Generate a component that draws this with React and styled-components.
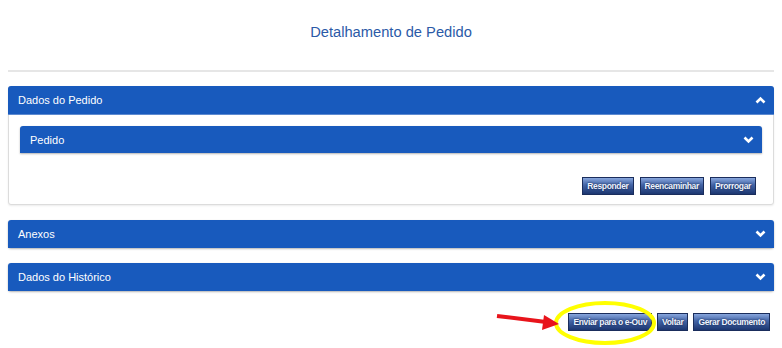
import React from "react";
import styled, { createGlobalStyle } from "styled-components";

const GlobalStyle = createGlobalStyle`
    body{
        margin: 0;
        background: #fff;
        font-family: "Liberation Sans", Arial, sans-serif;
    }
`;

const Page = styled.div`
    position: relative;
    padding: 0 8px;
    height: 348px;
    box-sizing: border-box;
`;

const Title = styled.h1`
    margin: 0;
    padding-top: 22px;
    font-size: 14.7px;
    line-height: 20px;
    font-weight: 400;
    text-align: center;
    color: #2b5aa7;
`;

const Divider = styled.div`
    margin-top: 28px;
    height: 2px;
    background: #e6e6e6;
`;

const Panel = styled.div`
    margin-top: ${(p) => p.gap || 15}px;
    border: ${(p) => (p.open ? "1px solid #dcdcdc" : "none")};
    border-radius: 3px;
    box-shadow: ${(p) => (p.open ? "0 1px 2px rgba(0,0,0,0.08)" : "0 1px 2px rgba(0,0,0,0.3)")};
    background: #fff;
`;

const Header = styled.div`
    display: flex;
    align-items: center;
    justify-content: space-between;
    height: ${(p) => p.h || 28}px;
    margin: ${(p) => (p.outer ? "-1px -1px 0" : "0")};
    padding: 0 8px 0 10px;
    background: #185abd;
    color: #fff;
    font-size: 11px;
    border-radius: 3px 3px 0 0;
    box-shadow: ${(p) => (p.inner ? "0 1px 2px rgba(0,0,0,0.3)" : "none")};
    border-bottom: ${(p) => (p.outer ? "1px solid #5d8ad0" : "none")};
`;

const PanelBody = styled.div`
    padding: 11px 11px 9px;
`;

const ButtonRow = styled.div`
    display: flex;
    justify-content: flex-end;
    gap: ${(p) => p.gap || 6}px;
    margin-top: ${(p) => p.top || 24}px;
    padding-right: ${(p) => p.right || 6}px;
`;

const Button = styled.button`
    height: 18px;
    padding: 0 4px;
    border: 1px solid #1a2d5c;
    background: linear-gradient(#88a6dd 0%, #4566a8 42%, #1c3670 100%);
    color: #eef3ff;
    font-family: "Liberation Sans", Arial, sans-serif;
    font-weight: 700;
    font-size: 8.5px;
    letter-spacing: -0.35px;
    text-shadow: 0 0 2px #0b1a3c;
    cursor: pointer;
`;

const Overlay = styled.svg`
    position: absolute;
    left: 488px;
    top: 296px;
`;

const Chevron = ({ up }) => (
    <svg width="11" height="8" viewBox="0 0 11 8">
        <polyline
            points={up ? "1.5,6.5 5.5,2.5 9.5,6.5" : "1.5,1.5 5.5,5.5 9.5,1.5"}
            fill="none"
            stroke="#fff"
            strokeWidth="2.6"
        />
    </svg>
);

const App = () => {
    return (
        <Page>
            <GlobalStyle />
            <Title>Detalhamento de Pedido</Title>
            <Divider />
            <Panel open gap={14}>
                <Header outer>
                    <span>Dados do Pedido</span>
                    <Chevron up />
                </Header>
                <PanelBody>
                    <Header inner h={27}>
                        <span>Pedido</span>
                        <Chevron />
                    </Header>
                    <ButtonRow>
                        <Button>Responder</Button>
                        <Button>Reencaminhar</Button>
                        <Button>Prorrogar</Button>
                    </ButtonRow>
                </PanelBody>
            </Panel>
            <Panel>
                <Header>
                    <span>Anexos</span>
                    <Chevron />
                </Header>
            </Panel>
            <Panel>
                <Header>
                    <span>Dados do Histórico</span>
                    <Chevron />
                </Header>
            </Panel>
            <ButtonRow top={22} right={4} gap={5}>
                <Button>Enviar para o e-Ouv</Button>
                <Button>Voltar</Button>
                <Button>Gerar Documento</Button>
            </ButtonRow>
            <Overlay width="180" height="52" viewBox="488 296 180 52">
                <ellipse cx="605" cy="323" rx="49" ry="20" fill="none" stroke="#ffff00" strokeWidth="4" />
                <line x1="497" y1="316" x2="546" y2="322" stroke="#e8141b" strokeWidth="4" />
                <polygon points="559,324 544,315 542,330" fill="#e8141b" />
            </Overlay>
        </Page>
    );
};

export default App;
